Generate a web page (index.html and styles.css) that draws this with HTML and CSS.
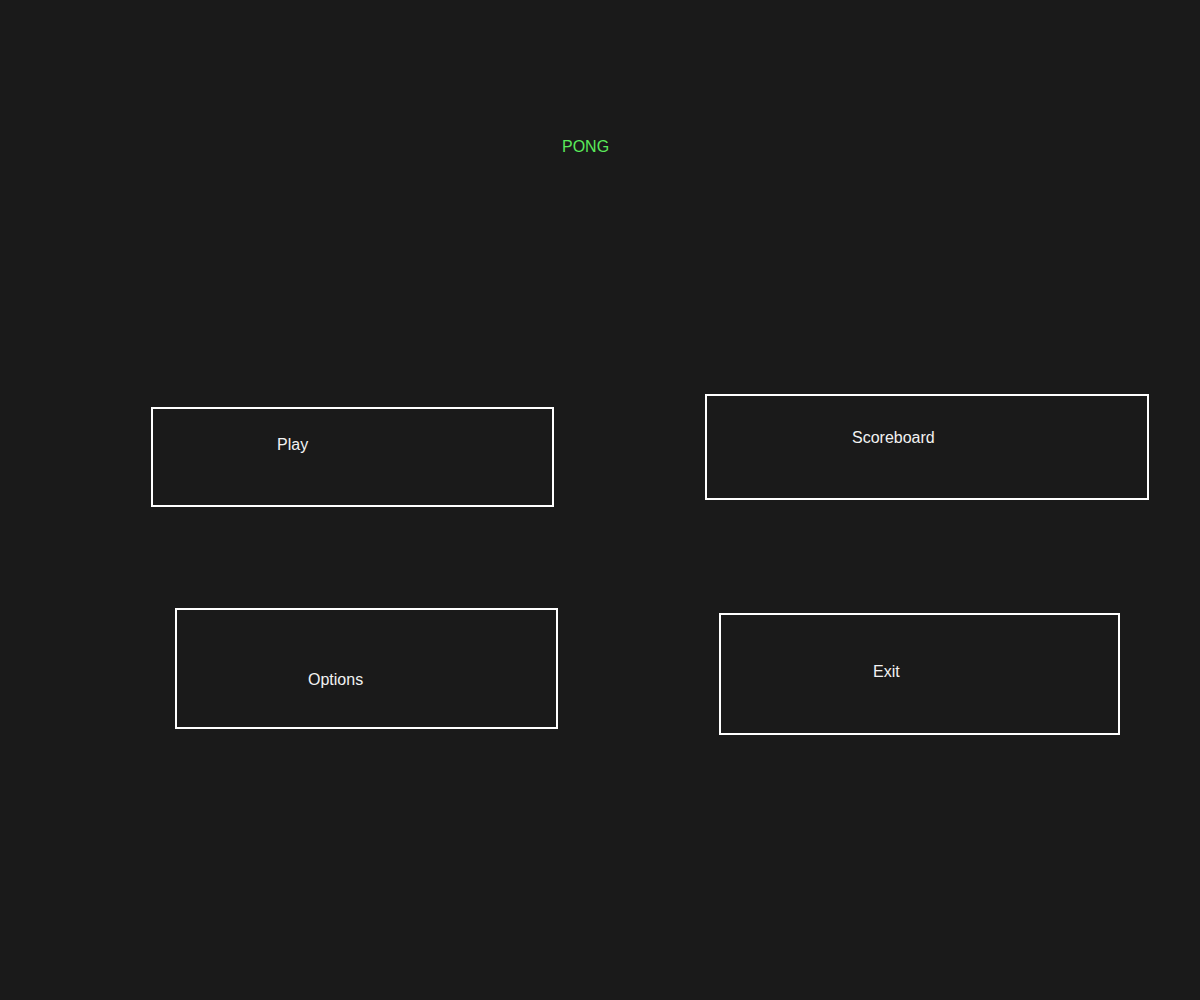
FILE: index.html
```html
<!DOCTYPE html>
<html lang="en">
<head>
    <meta charset="UTF-8">
    <meta name="viewport" content="width=device-width, initial-scale=1.0">
    <title>Pong</title>
    <link rel="stylesheet" href="styles.css">
</head>
<body>
    <div class="menu">
        <h1 class="title">PONG</h1>

        <div class="menu-row top-row">
            <div class="menu-button play">Play</div>
            <div class="menu-button scoreboard">Scoreboard</div>
        </div>

        <div class="menu-row">
            <div class="menu-button options">Options</div>
            <div class="menu-button exit">Exit</div>
        </div>
    </div>
</body>
</html>
```

FILE: styles.css
```css
html, body {
    margin: 0;
    padding: 0;
}
body {
    background-color: #1a1a1a;
    font-family: "Liberation Sans", Arial, sans-serif;
    font-size: 16px;
    min-height: 1000px;
}
.menu {
    padding-top: 138px;
}
.title {
    margin: 0 0 0 562px;
    font-size: 16px;
    font-weight: normal;
    line-height: 18px;
    color: #5aea5a;
}
.menu-row {
    display: flex;
    align-items: flex-start;
}
.top-row {
    margin-top: 238px;
}
.menu-button {
    box-sizing: border-box;
    flex: none;
    border: 2px solid #ffffff;
    color: #f2f2f2;
    font-size: 16px;
    line-height: 18px;
    cursor: pointer;
}
.menu-button:hover {
    background-color: #242424;
}
.play {
    margin: 13px 0 0 151px;
    width: 403px;
    height: 100px;
    padding: 27px 0 0 124px;
}
.scoreboard {
    margin: 0 0 0 151px;
    width: 444px;
    height: 106px;
    padding: 33px 0 0 145px;
}
.options {
    margin: 101px 0 0 175px;
    width: 383px;
    height: 121px;
    padding: 61px 0 0 131px;
}
.exit {
    margin: 106px 0 0 161px;
    width: 401px;
    height: 122px;
    padding: 48px 0 0 152px;
}
```
